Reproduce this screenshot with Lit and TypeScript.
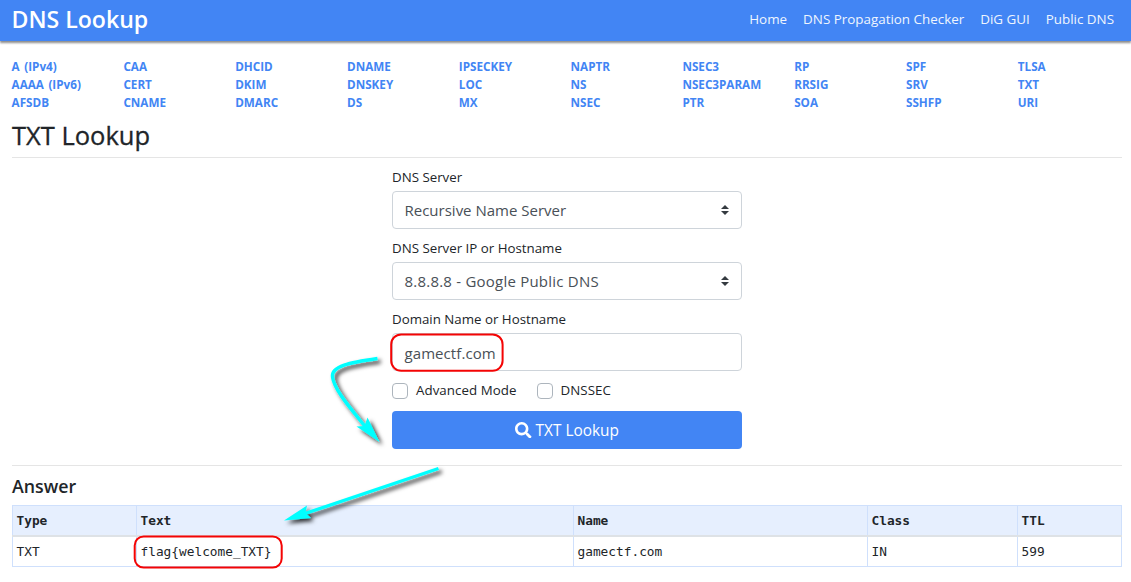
import { LitElement, html, css, svg } from "lit";
import { customElement } from "lit/decorators.js";

const RECORDS = [
  ["A (IPv4)", "AAAA (IPv6)", "AFSDB"],
  ["CAA", "CERT", "CNAME"],
  ["DHCID", "DKIM", "DMARC"],
  ["DNAME", "DNSKEY", "DS"],
  ["IPSECKEY", "LOC", "MX"],
  ["NAPTR", "NS", "NSEC"],
  ["NSEC3", "NSEC3PARAM", "PTR"],
  ["RP", "RRSIG", "SOA"],
  ["SPF", "SRV", "SSHFP"],
  ["TLSA", "TXT", "URI"],
];

@customElement("app-root")
export class AppRoot extends LitElement {
  static styles = css`
    * { box-sizing: border-box; }
    :host {
      display: block; position: relative; width: 1131px; height: 582px; overflow: hidden;
      background: #fff; color: #212529; font-family: "Open Sans", "Noto Sans", sans-serif;
      font-size: 13.3px; line-height: 20px; white-space: nowrap;
    }
    header {
      height: 41px; padding: 0 17px 4px 11.5px; background: #4285f4; color: #fff;
      display: flex; align-items: center; justify-content: space-between;
      box-shadow: 0 2px 2px rgba(0, 0, 0, .45);
    }
    .brand { font-size: 23.1px; font-weight: 600; line-height: 30px; }
    nav { display: flex; gap: 16px; font-size: 13.4px; }
    nav span { color: #eff5fe; }
    main { padding: 17px 9px 0 12px; }
    .records { display: grid; grid-template-columns: repeat(10, 111.8px); height: 54px; margin-left: -.4px; }
    .records div { display: flex; flex-direction: column; }
    .records span { height: 18px; line-height: 16px; font-size: 11.7px; font-weight: 700; word-spacing: 1.5px; color: #4285f4; }
    h1 { margin: 8px 0 0; height: 38px; line-height: 31px; font-size: 25.5px; font-weight: 500; -webkit-text-stroke: .3px #212529; }
    hr { margin: 0; height: 1px; border: 0; background: #e5e5e5; }
    hr.first { margin-top: -1px; }
    form { width: 350px; margin: 9px 0 0 380px; display: flex; flex-direction: column; }
    label { height: 20px; line-height: 20px; margin-bottom: 4px; }
    .field {
      height: 38px; margin-bottom: 9px; padding: 0 12px 0 11.5px; border: 1px solid #ced4da; border-radius: 4px;
      display: flex; align-items: center; justify-content: space-between; color: #495057; font-size: 15px;
    }
    .spaced { letter-spacing: .22px; }
    .typed { padding-top: 2px; letter-spacing: .08px; }
    .carets { width: 8px; height: 10px; fill: #343a40; }
    .checks { display: flex; height: 20px; margin-bottom: 11px; }
    .check { display: flex; align-items: center; gap: 8px; margin-right: 20px; letter-spacing: .06px; }
    .box { width: 16px; height: 16px; margin-top: 1px; border: 1px solid #adb5bd; border-radius: 4px; }
    .button {
      height: 38px; border-radius: 4px; background: #4285f4; color: #fff; font-size: 15.4px;
      display: flex; align-items: center; justify-content: center; gap: 4px;
    }
    .button svg { width: 16.5px; height: 16.5px; fill: #fff; }
    .button span { padding-top: 2px; }
    hr.second { margin-top: 16px; }
    h2 { margin: 9px 0 7px; height: 23px; line-height: 23px; font-size: 17.8px; font-weight: 600; }
    table {
      border-collapse: collapse; table-layout: fixed; width: 1109px;
      font: 12.8px/21px "DejaVu Sans Mono", "Liberation Mono", monospace;
    }
    th, td { height: 30px; padding: 0 3.5px; text-align: left; border: 1px solid #cfe0fc; }
    td { height: 31px; }
    th { background: #e6effe; border-bottom: 2px solid #dee2e6; }
    .notes { position: absolute; left: 0; top: 0; width: 1131px; height: 582px; pointer-events: none; }
  `;

  private select(label: string, value: string, cls: string) {
    return html`<label>${label}</label>
      <div class="field"><span class=${cls}>${value}</span>
        <svg class="carets" viewBox="0 0 4 5"><path d="M2 0L0 2h4zm0 5L0 3h4z" /></svg>
      </div>`;
  }

  private notes() {
    return svg`
      <defs>
        <filter id="shade" x="-30%" y="-30%" width="160%" height="160%">
          <feDropShadow dx="3" dy="3" stdDeviation="2" flood-color="#000" flood-opacity=".8" />
        </filter>
      </defs>
      <g fill="none" stroke="#f40404" stroke-width="2">
        <rect x="391.2" y="334.4" width="111.4" height="36.4" rx="10" />
        <rect x="134.7" y="536.4" width="147" height="31.2" rx="9" />
      </g>
      <g filter="url(#shade)">
        <path d="M377.500 358.500C350 362.500 331 366 332.500 377C334.500 391 353 411 365.500 427" fill="none" stroke="#0ff" stroke-width="3.4" />
        <path d="M379.500 442L356.500 426.500L364.500 426L367.500 417.500Z" fill="#0ff" />
      </g>
      <g filter="url(#shade)">
        <path d="M438.500 468.500L305 513.500" fill="none" stroke="#0ff" stroke-width="3.4" />
        <path d="M284 520.500L307 505.500L305.500 513L311 518Z" fill="#0ff" />
      </g>`;
  }

  render() {
    return html`
      <header>
        <div class="brand">DNS Lookup</div>
        <nav><span>Home</span><span>DNS Propagation Checker</span><span>DiG GUI</span><span>Public DNS</span></nav>
      </header>
      <main>
        <div class="records">${RECORDS.map((c) => html`<div>${c.map((r) => html`<span>${r}</span>`)}</div>`)}</div>
        <h1>TXT Lookup</h1>
        <hr class="first" />
        <form>
          ${this.select("DNS Server", "Recursive Name Server", "plain")}
          ${this.select("DNS Server IP or Hostname", "8.8.8.8 - Google Public DNS", "spaced")}
          <label>Domain Name or Hostname</label>
          <div class="field"><span class="typed">gamectf.com</span></div>
          <div class="checks">
            <div class="check"><i class="box"></i><span>Advanced Mode</span></div>
            <div class="check"><i class="box"></i><span>DNSSEC</span></div>
          </div>
          <div class="button">
            <svg viewBox="0 0 512 512"><path d="M505 442.700L405.300 343c-4.500-4.500-10.600-7-17-7H372c27.600-35.300 44-79.700 44-128C416 93.100 322.900 0 208 0S0 93.100 0 208s93.100 208 208 208c48.300 0 92.700-16.400 128-44v16.300c0 6.400 2.500 12.500 7 17l99.700 99.700c9.400 9.400 24.600 9.400 33.900 0l28.300-28.300c9.400-9.400 9.400-24.600.1-34zM208 336c-70.700 0-128-57.200-128-128 0-70.700 57.200-128 128-128 70.700 0 128 57.200 128 128 0 70.700-57.200 128-128 128z" /></svg>
            <span>TXT Lookup</span>
          </div>
        </form>
        <hr class="second" />
        <h2>Answer</h2>
        <table>
          <colgroup><col style="width:124px" /><col style="width:437px" /><col style="width:294px" /><col style="width:150px" /><col style="width:104px" /></colgroup>
          <thead><tr><th>Type</th><th>Text</th><th>Name</th><th>Class</th><th>TTL</th></tr></thead>
          <tbody><tr><td>TXT</td><td>flag{welcome_TXT}</td><td>gamectf.com</td><td>IN</td><td>599</td></tr></tbody>
        </table>
      </main>
      <svg class="notes" viewBox="0 0 1131 582">${this.notes()}</svg>`;
  }
}
